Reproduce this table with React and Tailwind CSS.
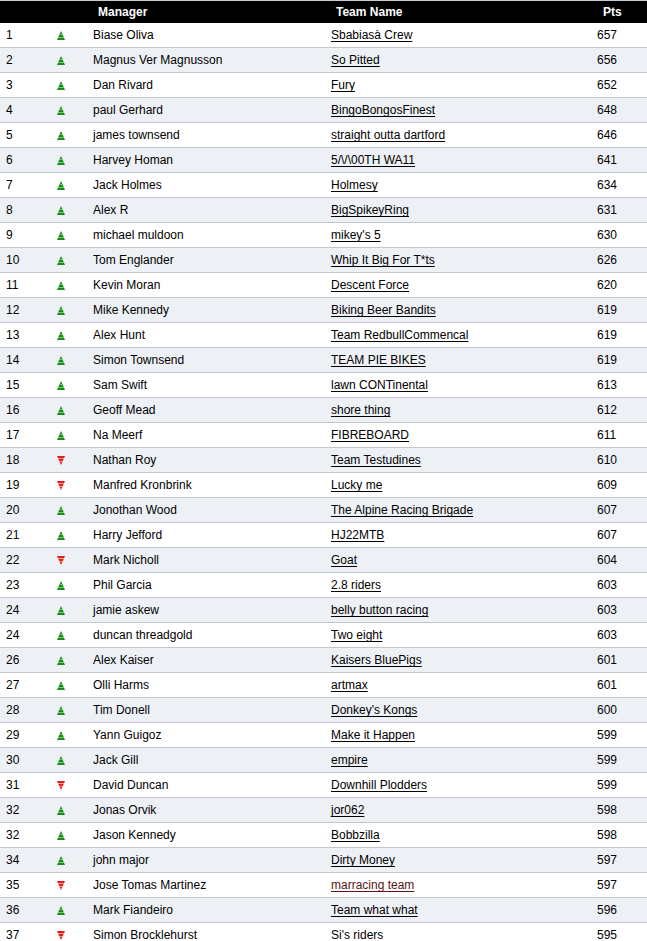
const rows = [
  [1, "up", "Biase Oliva", "Sbabiasà Crew", 657],
  [2, "up", "Magnus Ver Magnusson", "So Pitted", 656],
  [3, "up", "Dan Rivard", "Fury", 652],
  [4, "up", "paul Gerhard", "BingoBongosFinest", 648],
  [5, "up", "james townsend", "straight outta dartford", 646],
  [6, "up", "Harvey Homan", "5/\\/\\00TH WA11", 641],
  [7, "up", "Jack Holmes", "Holmesy", 634],
  [8, "up", "Alex R", "BigSpikeyRing", 631],
  [9, "up", "michael muldoon", "mikey's 5", 630],
  [10, "up", "Tom Englander", "Whip It Big For T*ts", 626],
  [11, "up", "Kevin Moran", "Descent Force", 620],
  [12, "up", "Mike Kennedy", "Biking Beer Bandits", 619],
  [13, "up", "Alex Hunt", "Team RedbullCommencal", 619],
  [14, "up", "Simon Townsend", "TEAM PIE BIKES", 619],
  [15, "up", "Sam Swift", "lawn CONTinental", 613],
  [16, "up", "Geoff Mead", "shore thing", 612],
  [17, "up", "Na Meerf", "FIBREBOARD", 611],
  [18, "down", "Nathan Roy", "Team Testudines", 610],
  [19, "down", "Manfred Kronbrink", "Lucky me", 609],
  [20, "up", "Jonothan Wood", "The Alpine Racing Brigade", 607],
  [21, "up", "Harry Jefford", "HJ22MTB", 607],
  [22, "down", "Mark Nicholl", "Goat", 604],
  [23, "up", "Phil Garcia", "2.8 riders", 603],
  [24, "up", "jamie askew", "belly button racing", 603],
  [24, "up", "duncan threadgold", "Two eight", 603],
  [26, "up", "Alex Kaiser", "Kaisers BluePigs", 601],
  [27, "up", "Olli Harms", "artmax", 601],
  [28, "up", "Tim Donell", "Donkey's Kongs", 600],
  [29, "up", "Yann Guigoz", "Make it Happen", 599],
  [30, "up", "Jack Gill", "empire", 599],
  [31, "down", "David Duncan", "Downhill Plodders", 599],
  [32, "up", "Jonas Orvik", "jor062", 598],
  [32, "up", "Jason Kennedy", "Bobbzilla", 598],
  [34, "up", "john major", "Dirty Money", 597],
  [35, "down", "Jose Tomas Martinez", "marracing team", 597],
  [36, "up", "Mark Fiandeiro", "Team what what", 596],
  [37, "down", "Simon Brocklehurst", "Si's riders", 595],
];

const Arrow = ({ dir }) =>
  dir === "up" ? (
    <svg width="8" height="9" viewBox="0 0 8 9" className="block">
      <polygon points="4,0 8,9 0,9" fill="#1a8a1a" />
      <rect x="2" y="3" width="4" height="1" fill="#6fd06f" />
      <rect x="1" y="6" width="6" height="1" fill="#6fd06f" />
    </svg>
  ) : (
    <svg width="8" height="9" viewBox="0 0 8 9" className="block">
      <polygon points="0,0 8,0 4,9" fill="#e02020" />
      <rect x="1" y="2" width="6" height="1" fill="#ff9a7a" />
      <rect x="2" y="5" width="4" height="1" fill="#ff9a7a" />
    </svg>
  );

const cols = "grid grid-cols-[51px_42px_238px_266px_1fr]";

export default function App() {
  return (
    <div
      className="w-[647px] bg-white text-[12px] text-black"
      style={{ fontFamily: '"Liberation Sans", Arial, sans-serif' }}
    >
      <div className={`${cols} h-[23px] items-center border-t border-[#c8ccd4] bg-black font-bold text-white`}>
        <div />
        <div />
        <div className="pl-[5px]">Manager</div>
        <div className="pl-[5px]">Team Name</div>
        <div className="pl-[6px]">Pts</div>
      </div>
      {rows.map(([rank, dir, manager, team, pts], i) => (
        <div
          key={i}
          className={`${cols} h-[25px] items-center border-b border-[#c4c6ca] ${
            i % 2 === 1 ? "bg-[#edf0f5]" : "bg-white"
          }`}
        >
          <div className="pl-[6px]">{rank}</div>
          <div className="pl-[6px]">
            <Arrow dir={dir} />
          </div>
          <div>{manager}</div>
          <div>
            <a
              href="#"
              className={`underline underline-offset-[2px] ${
                team === "marracing team" ? "text-[#5a1414]" : "text-black"
              }`}
            >
              {team}
            </a>
          </div>
          <div>{pts}</div>
        </div>
      ))}
    </div>
  );
}
